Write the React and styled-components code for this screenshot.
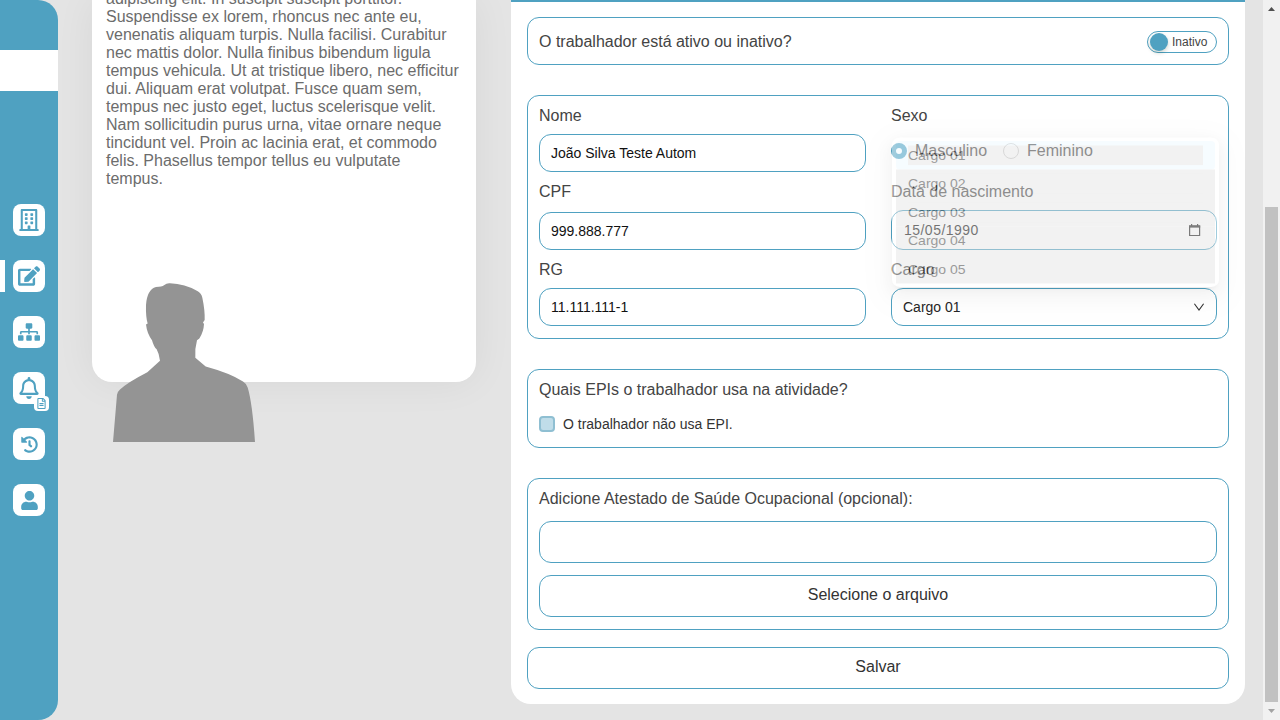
import React from "react";
import styled, { createGlobalStyle, css } from "styled-components";
import {
  FaRegBuilding,
  FaEdit,
  FaSitemap,
  FaRegBell,
  FaHistory,
  FaUser,
  FaRegFileAlt,
} from "react-icons/fa";

const blue = "#4fa1c1";

const GlobalStyle = createGlobalStyle`
  * { box-sizing: border-box; }
  body {
    margin: 0;
    background: #e4e4e4;
    color: #444;
    font: 16px/18px "Liberation Sans", Arial, sans-serif;
    overflow: hidden;
  }
`;

const Page = styled.div`
  display: flex;
  width: 1280px;
  height: 720px;
  overflow: hidden;
`;

const Sidebar = styled.nav`
  flex: none;
  width: 58px;
  background: ${blue};
  border-radius: 0 20px 20px 0;
  padding-top: 50px;
`;

const LogoStrip = styled.div`
  height: 41px;
  background: #fff;
  margin-bottom: 113px;
`;

const NavItem = styled.div`
  position: relative;
  display: flex;
  justify-content: center;
  height: 32px;
  margin-bottom: 24px;
  border-left: 5px solid ${(p) => (p.$active ? "#fff" : "transparent")};
  padding-right: 5px;
`;

const NavIcon = styled.span`
  display: flex;
  align-items: center;
  justify-content: center;
  width: 32px;
  height: 32px;
  border-radius: 8px;
  background: #fff;
  color: ${blue};
  font-size: ${(p) => p.$size || 22}px;
`;

const NavBadge = styled.span`
  position: absolute;
  left: 29px;
  top: 24px;
  display: flex;
  align-items: center;
  justify-content: center;
  width: 15px;
  height: 15px;
  border-radius: 4px;
  background: #fff;
  color: ${blue};
  font-size: 11px;
`;

const InfoCard = styled.section`
  position: relative;
  flex: none;
  width: 384px;
  height: 382px;
  margin-left: 34px;
  padding: 0 14px;
  background: #fff;
  border-radius: 0 0 20px 20px;
  box-shadow: 0 0 40px rgba(0, 0, 0, 0.06);
`;

const InfoText = styled.p`
  margin: -10px 0 0;
  color: #6c6c6c;
  white-space: pre-line;
`;

const Silhouette = styled.svg`
  position: absolute;
  left: 21px;
  top: 283px;
  width: 142px;
  height: 159px;
  fill: #949494;
`;

const FormPanel = styled.main`
  flex: none;
  width: 734px;
  height: 704px;
  margin-left: 35px;
  padding: 15px 16px;
  background: #fff;
  border-top: 2px solid ${blue};
  border-radius: 0 0 20px 20px;
`;

const outline = css`
  border: 1px solid ${blue};
  border-radius: 12px;
`;

const Card = styled.div`
  ${outline}
  height: ${(p) => p.$height}px;
  margin-bottom: ${(p) => p.$gap || 30}px;
  padding: 11px;
`;

const StatusCard = styled(Card)`
  display: flex;
  align-items: center;
  justify-content: space-between;
  padding-bottom: 10px;
`;

const Toggle = styled.div`
  display: flex;
  align-items: center;
  gap: 4px;
  width: 70px;
  height: 22px;
  padding-left: 2px;
  border: 1px solid ${blue};
  border-radius: 11px;
  font-size: 12px;
`;

const Knob = styled.span`
  width: 18px;
  height: 18px;
  border-radius: 50%;
  background: ${blue};
  box-shadow: 0 2px 4px rgba(0, 35, 11, 0.2);
`;

const Fields = styled(Card)`
  position: relative;
  display: grid;
  grid-template-columns: 327px 326px;
  grid-template-rows: 65px 67px 65px;
  column-gap: 25px;
  row-gap: 11px;
`;

const Field = styled.div`
  display: flex;
  flex-direction: column;
  justify-content: space-between;
`;

const Input = styled.div`
  ${outline}
  display: flex;
  align-items: center;
  justify-content: space-between;
  height: ${(p) => p.$height || 38}px;
  padding: 0 11px;
  font-size: 14px;
  color: ${(p) => p.$color || "#111"};
`;

const DateText = styled.span`
  letter-spacing: 0.47px;
  padding-left: 1px;
`;

const RadioRow = styled.div`
  display: flex;
  align-items: center;
  height: 38px;
  padding-bottom: 4px;
`;

const Radio = styled.span`
  width: 16px;
  height: 16px;
  margin-right: 8px;
  border-radius: 50%;
  border: ${(p) => (p.$on ? `5px solid ${blue}` : "1px solid #d0d0d0")};
`;

const RadioLabel = styled.span`
  margin-right: 16px;
`;

const Dropdown = styled.div`
  position: absolute;
  left: 364px;
  top: 23px;
  width: 327px;
  height: 168px;
  padding: 4px;
  background: #fff;
  border-radius: 8px;
  opacity: 0.46;
  transform: scaleY(0.89);
  transform-origin: 0 100%;
  box-shadow: 0 6px 16px rgba(0, 0, 0, 0.08), 0 3px 6px -4px rgba(0, 0, 0, 0.12),
    0 9px 28px 8px rgba(0, 0, 0, 0.05);
  font-size: 14px;
  line-height: 22px;
  color: #222;
`;

const Option = styled.div`
  height: 32px;
  padding: 5px 12px;
  background: ${(p) => (p.$selected ? "#edf9ff" : "#e3e3e3")};
  border-radius: ${(p) => (p.$selected ? 4 : 0)}px;
`;

const OptionText = styled.div`
  background: #e3e3e3;
`;

const CheckRow = styled.div`
  display: flex;
  align-items: center;
  gap: 8px;
  margin-top: 16px;
  font-size: 14px;
  color: #333;
`;

const Checkbox = styled.span`
  width: 16px;
  height: 16px;
  border: 2px solid #8fbfd2;
  border-radius: 4px;
  background: #c0dde9;
`;

const Button = styled.button`
  ${outline}
  display: block;
  width: 100%;
  height: 42px;
  margin-top: ${(p) => p.$top || 0}px;
  padding: 0 0 2px;
  background: #fff;
  font: inherit;
  color: #333;
`;

const FileBox = styled.div`
  ${outline}
  height: 42px;
  margin-top: 13px;
`;

const Scrollbar = styled.div`
  display: flex;
  flex-direction: column;
  align-items: center;
  width: 17px;
  height: 720px;
  margin-left: auto;
  background: #f1f1f1;
`;

const Thumb = styled.div`
  width: 13px;
  height: 495px;
  margin-top: 196px;
  background: #c1c1c1;
`;

const Arrow = styled.svg`
  display: block;
  width: 7px;
  height: 4px;
  margin-top: ${(p) => p.$top}px;
`;

const lorem = `adipiscing elit. In suscipit suscipit porttitor.
Suspendisse ex lorem, rhoncus nec ante eu,
venenatis aliquam turpis. Nulla facilisi. Curabitur
nec mattis dolor. Nulla finibus bibendum ligula
tempus vehicula. Ut at tristique libero, nec efficitur
dui. Aliquam erat volutpat. Fusce quam sem,
tempus nec justo eget, luctus scelerisque velit.
Nam sollicitudin purus urna, vitae ornare neque
tincidunt vel. Proin ac lacinia erat, et commodo
felis. Phasellus tempor tellus eu vulputate
tempus.`;

const roles = ["Cargo 01", "Cargo 02", "Cargo 03", "Cargo 04", "Cargo 05"];

export default function App() {
  return (
    <Page>
      <GlobalStyle />
      <Sidebar>
        <LogoStrip />
        <NavItem><NavIcon><FaRegBuilding /></NavIcon></NavItem>
        <NavItem $active><NavIcon><FaEdit /></NavIcon></NavItem>
        <NavItem><NavIcon><FaSitemap /></NavIcon></NavItem>
        <NavItem>
          <NavIcon><FaRegBell /></NavIcon>
          <NavBadge><FaRegFileAlt /></NavBadge>
        </NavItem>
        <NavItem><NavIcon $size={17}><FaHistory /></NavIcon></NavItem>
        <NavItem><NavIcon $size={19}><FaUser /></NavIcon></NavItem>
      </Sidebar>

      <InfoCard>
        <InfoText>{lorem}</InfoText>
        <Silhouette viewBox="69 38 426 478" preserveAspectRatio="none">
          <path d="M69 516 L81 374 Q82 365 90 358 Q112 337 172 306 L210 272 Q208 251 200 237 Q192 231 186 210 Q171 190 168 163 L173 160 Q167 140 168 104 Q171 58 198 50 Q216 50 222 45 Q230 38 240 39 Q285 41 322 62 Q334 68 337 82 Q345 120 344 149 L339 157 L342 161 Q341 184 328 205 L321 210 Q314 235 316 263 L347 289 Q420 309 459 334 Q469 340 473 352 Q487 398 495 516 Z" />
        </Silhouette>
      </InfoCard>

      <FormPanel>
        <StatusCard $height={48}>
          <span>O trabalhador está ativo ou inativo?</span>
          <Toggle><Knob />Inativo</Toggle>
        </StatusCard>

        <Fields $height={244}>
          <Field>
            <span>Nome</span>
            <Input>João Silva Teste Autom</Input>
          </Field>
          <Field>
            <span>Sexo</span>
            <RadioRow>
              <Radio $on />
              <RadioLabel>Masculino</RadioLabel>
              <Radio />
              <RadioLabel>Feminino</RadioLabel>
            </RadioRow>
          </Field>
          <Field>
            <span>CPF</span>
            <Input>999.888.777</Input>
          </Field>
          <Field>
            <span>Data de nascimento</span>
            <Input $height={40}>
              <DateText>15/05/1990</DateText>
              <svg width="20" height="14" viewBox="0 0 20 14">
                <path d="M4.6 3h10v9.5h-10zM6.6 1v2M12.6 1v2" fill="none" stroke="#222" strokeWidth="1.2" />
                <path d="M4 2.4h11.2v2.2H4z" fill="#222" />
              </svg>
            </Input>
          </Field>
          <Field>
            <span>RG</span>
            <Input>11.111.111-1</Input>
          </Field>
          <Field>
            <span>Cargo</span>
            <Input $color="#262626">
              Cargo 01
              <svg width="12" height="12" viewBox="0 0 12 12">
                <path d="M1.4 2.7 6 9 10.6 2.7" fill="none" stroke="#333" strokeWidth="1.1" />
              </svg>
            </Input>
          </Field>
          <Dropdown>
            {roles.map((role, i) => (
              <Option key={role} $selected={i === 0}>
                <OptionText>{role}</OptionText>
              </Option>
            ))}
          </Dropdown>
        </Fields>

        <Card $height={79}>
          Quais EPIs o trabalhador usa na atividade?
          <CheckRow><Checkbox />O trabalhador não usa EPI.</CheckRow>
        </Card>

        <Card $height={152} $gap={17}>
          Adicione Atestado de Saúde Ocupacional (opcional):
          <FileBox />
          <Button $top={12}>Selecione o arquivo</Button>
        </Card>
        <Button>Salvar</Button>
      </FormPanel>

      <Scrollbar>
        <Arrow $top={7} viewBox="0 0 7 4"><path d="M0 4 3.5 0 7 4z" fill="#505050" /></Arrow>
        <Thumb />
        <Arrow $top={7} viewBox="0 0 7 4"><path d="M0 0h7L3.5 4z" fill="#a3a3a3" /></Arrow>
      </Scrollbar>
    </Page>
  );
}
